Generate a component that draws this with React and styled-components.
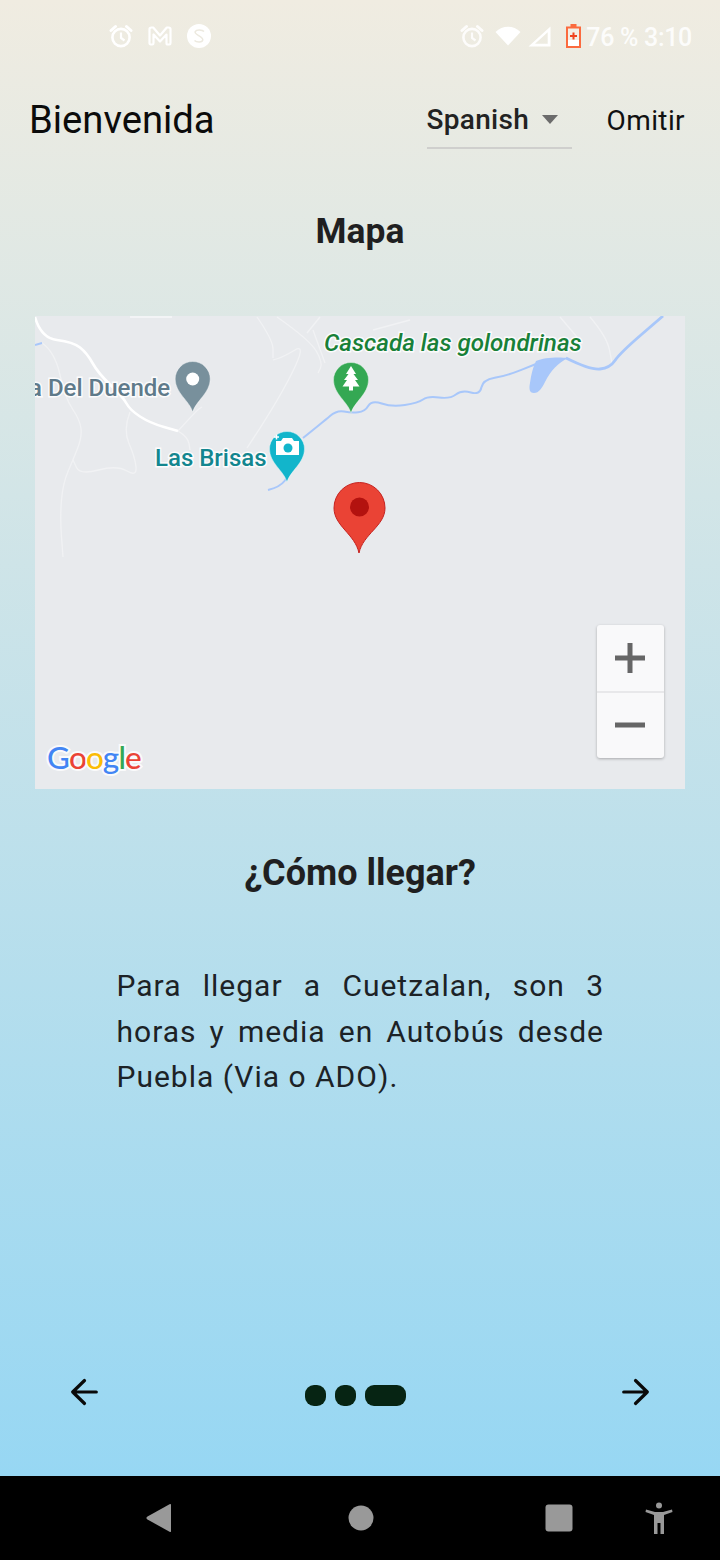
import React from "react";
import styled, { createGlobalStyle } from "styled-components";

const Global = createGlobalStyle`
  html, body { margin: 0; padding: 0; background: #000; }
  #root { width: 720px; height: 1560px; }
`;

const Page = styled.div`
  width: 720px;
  height: 1560px;
  display: flex;
  flex-direction: column;
  overflow: hidden;
  font-family: Roboto, "Noto Sans", sans-serif;
  color: #1d1d1f;
`;

const Screen = styled.main`
  flex: 0 0 1476px;
  display: flex;
  flex-direction: column;
  background: linear-gradient(180deg, #f0ece1 0%, #97d7f3 100%);
`;

const StatusBar = styled.header`
  height: 72px;
  padding: 0 28px 0 109px;
  box-sizing: border-box;
  display: flex;
  align-items: center;
  justify-content: space-between;
  color: #fff;
`;

const StatusGroup = styled.div`
  display: flex;
  align-items: center;
  gap: ${(p) => p.$gap}px;
`;

const StatusIcon = styled.span`
  display: flex;
  margin-left: ${(p) => p.$left || 0}px;
  margin-top: ${(p) => p.$top || 0}px;
`;

const StatusText = styled.span`
  font-size: 25px;
  font-weight: 500;
  line-height: 30px;
  margin-left: -5px;
  margin-top: 4px;
  letter-spacing: -0.3px;
  color: rgba(255, 255, 255, 0.88);
  white-space: nowrap;
`;

const AppBar = styled.div`
  height: 96px;
  padding: 0 35px 0 29px;
  display: flex;
  align-items: center;
`;

const AppTitle = styled.h1`
  flex: 1;
  margin: 0;
  font-size: 38.2px;
  font-weight: 400;
  color: #0b0b0b;
`;

const LangSelect = styled.div`
  width: 145px;
  height: 58px;
  box-sizing: border-box;
  border-bottom: 2px solid #cfcfcd;
  display: flex;
  align-items: center;
  justify-content: space-between;
  padding: 0 14px 0 0;
  font-size: 28px;
  font-weight: 500;
  letter-spacing: 0.3px;
  color: #222;
`;

const Caret = styled.span`
  width: 0;
  height: 0;
  border-left: 8.5px solid transparent;
  border-right: 8.5px solid transparent;
  border-top: 9px solid #6b6b6b;
`;

const SkipLink = styled.span`
  margin-left: 35px;
  font-size: 28px;
  letter-spacing: 0.4px;
  color: #111;
`;

const SectionTitle = styled.h2`
  margin: ${(p) => p.$top}px 0 0;
  height: 40px;
  font-size: ${(p) => p.$size}px;
  line-height: 40px;
  font-weight: 700;
  text-align: center;
  color: #1f1f21;
`;

const MapFrame = styled.section`
  position: relative;
  width: 650px;
  height: 473px;
  margin: 65px 0 0 35px;
  background: #e8eaed;
  overflow: hidden;
`;

const MapArt = styled.svg`
  display: block;
  width: 650px;
  height: 473px;
`;

const MapLabel = styled.text`
  font-family: Roboto, sans-serif;
  font-weight: 500;
  font-size: ${(p) => p.$size}px;
  font-style: ${(p) => (p.$italic ? "italic" : "normal")};
  fill: ${(p) => p.$color};
  stroke: #fff;
  stroke-width: 3px;
  stroke-opacity: 0.85;
  paint-order: stroke;
`;

const LogoText = styled.text`
  font-family: Lato, sans-serif;
  font-size: 31.5px;
  font-weight: 500;
  letter-spacing: -0.9px;
  stroke: #fff;
  stroke-width: 4px;
  stroke-opacity: 0.8;
  paint-order: stroke;
`;

const ZoomControl = styled.div`
  position: absolute;
  top: 309px;
  right: 21.5px;
  width: 67px;
  height: 133px;
  display: flex;
  flex-direction: column;
  background: #f9f9fa;
  border-radius: 3px;
  box-shadow: 0 1px 3px rgba(0, 0, 0, 0.28);
`;

const ZoomButton = styled.div`
  flex: 1;
  display: flex;
  align-items: center;
  justify-content: center;
  border-top: ${(p) => (p.$divider ? "2px solid #e8e8ea" : "none")};
`;

const Paragraph = styled.p`
  margin: 70px 116px 0 116.5px;
  font-size: 30px;
  line-height: 45.5px;
  letter-spacing: 1px;
  text-align: justify;
  color: #1c2226;
`;

const Pager = styled.div`
  margin-top: auto;
  height: 98px;
  padding: 0 70px;
  display: flex;
  align-items: flex-start;
  justify-content: space-between;
`;

const Dots = styled.div`
  display: flex;
  gap: 9px;
  margin: 7px 0 0 -9px;
`;

const Dot = styled.span`
  display: block;
  width: ${(p) => (p.$active ? 41 : 21)}px;
  height: 21px;
  border-radius: 9px;
  background: #062413;
`;

const NavBar = styled.nav`
  flex: 0 0 84px;
  background: #000;
  display: flex;
  align-items: center;
  padding: 0 47px 0 146px;
  box-sizing: border-box;
`;

const NavSlot = styled.span`
  display: flex;
  margin-left: ${(p) => p.$left}px;
`;

const Arrow = ({ dir }) => (
  <svg width="30" height="28" viewBox="0 0 30 28" fill="none" stroke="#0a0a0a" strokeWidth="3.2" strokeLinecap="round" strokeLinejoin="round">
    {dir === "left" ? <path d="M26.3 14H2.7M14.5 2.500 2.700 14 14.500 25.500" /> : <path d="M3.700 14h23.600M15.500 2.500 27.300 14 15.500 25.500" />}
  </svg>
);

const Alarm = ({ o = 1 }) => (
  <svg width="24" height="24" viewBox="0 0 24 24" fill="none" stroke="#fff" strokeOpacity={o} strokeWidth="2.6">
    <circle cx="12" cy="13.5" r="8.6" />
    <path d="M12 8.5v5.5l3.5 2.500" strokeWidth="2.200" />
    <path d="M2 6.500 6.500 2.500M22 6.500 17.500 2.500" strokeLinecap="round" strokeWidth="3" />
  </svg>
);

const Pin = ({ x, y, color }) => (
  <path
    d={`M${x} ${y + 33}C${x - 3} ${y + 22} ${x - 17.5} ${y + 14} ${x - 17.5} ${y}a17.5 17.5 0 0 1 35 0C${x + 17.5} ${y + 14} ${x + 3} ${y + 22} ${x} ${y + 33}Z`}
    fill={color}
    stroke="#fff"
    strokeOpacity="0.5"
    strokeWidth="0.8"
  />
);

// Smooth a polyline through midpoints with quadratic segments.
const smooth = (pts) => {
  let d = `M${pts[0][0]} ${pts[0][1]}`;
  for (let i = 1; i < pts.length - 1; i++) {
    const mx = (pts[i][0] + pts[i + 1][0]) / 2;
    const my = (pts[i][1] + pts[i + 1][1]) / 2;
    d += `Q${pts[i][0]} ${pts[i][1]} ${mx} ${my}`;
  }
  const last = pts[pts.length - 1];
  return `${d}L${last[0]} ${last[1]}`;
};

const faintRoads = [
  [[42, 343], [55, 352], [65, 398], [80, 420], [82, 437], [73, 460], [63, 483], [60, 517], [63, 557]],
  [[130, 412], [123, 430], [135, 457], [137, 477], [117, 465], [80, 475], [73, 460]],
  [[178, 431], [197, 410], [202, 407]],
  [[178, 431], [188, 437], [190, 450]],
  [[247, 448], [277, 403], [307, 343], [283, 357], [273, 360]],
  [[257, 317], [273, 340], [273, 358]],
  [[277, 317], [310, 340], [323, 363], [318, 373]],
  [[320, 317], [307, 333]],
  [[590, 317], [607, 337], [612, 363]],
  [[560, 317], [577, 337]],
  [[410, 320], [373, 330]],
  [[313, 330], [325, 363]],
];

const road = [[35, 317], [41, 338], [73, 342], [87, 353], [98, 373], [123, 397], [130, 410], [150, 423], [178, 431]];

const riverMain = [[268, 490], [280, 487], [289, 475]];
const riverUpper = [[303, 438], [323, 422], [337, 410], [351, 413], [365, 411.7], [371.7, 400], [391.7, 407], [418, 403], [428, 396], [450, 399], [461.7, 390], [480, 395], [482.7, 380], [506.7, 375.7], [536, 364]];
const riverEast = [[566, 358], [590, 370], [610, 368], [620, 353], [663, 316]];

export default function App() {
  return (
    <Page>
      <Global />
      <Screen>
        <StatusBar>
          <StatusGroup $gap={15}>
            <Alarm />
            <svg width="24" height="20" viewBox="0 0 24 20" fill="none" stroke="#fff" strokeWidth="2.2" strokeLinejoin="round">
              <path d="M1.5 3c0-1 .8-1.5 2-1.5h1.7L12 9.5l6.8-8h1.7c1.2 0 2 .5 2 1.5v14c0 1-.5 1.5-1.2 1.5h-1.6c-.7 0-1.2-.5-1.2-1.5V8.5L12 15.5l-6.5-7V17c0 1-.5 1.5-1.2 1.5H2.7c-.7 0-1.2-.5-1.2-1.5Z" />
            </svg>
            <svg width="24" height="24" viewBox="0 0 24 24">
              <circle cx="12" cy="12" r="12" fill="#fff" />
              <path d="M17 7.5c-1.5-1.8-7.5-2.5-8.8.2-1.4 3 7.6 4.7 7.6 8.1-.2 3-6.300 2.700-8.300.700" fill="none" stroke="#ece9df" strokeWidth="1.500" />
            </svg>
          </StatusGroup>
          <StatusGroup $gap={10}>
            <Alarm o={0.85} />
            <StatusIcon $left={1}>
              <svg width="26" height="20" viewBox="0 0 26 20"><path d="M0.500 6C7.500 -1 18.500 -1 25.500 6L13 19.500Z" fill="#fff" /></svg>
            </StatusIcon>
            <StatusIcon $left={-3} $top={1}>
              <svg width="23" height="21" viewBox="0 0 23 21"><path d="M0.500 20.500 22.500 0.500v20Zm6.500-2.700h12.700V6.300Z" fill="#fff" fillRule="evenodd" /></svg>
            </StatusIcon>
            <StatusIcon $left={5} $top={-1}>
              <svg width="15" height="24" viewBox="0 0 15 24">
                <path d="M4.500 0h6v2.500h4.500v21.500H0V2.500h4.500Z" fill="#fb6a3e" />
                <rect x="2" y="4.500" width="11" height="17.500" fill="#f3efe6" />
                <rect x="2" y="16" width="11" height="6" fill="#fff" />
                <path d="M6.500 8.500h2v2.500h2.500v2H8.500v2.500h-2V13H4v-2h2.500Z" fill="#f0441f" />
              </svg>
            </StatusIcon>
            <StatusText>76 % 3:10</StatusText>
          </StatusGroup>
        </StatusBar>

        <AppBar>
          <AppTitle>Bienvenida</AppTitle>
          <LangSelect>
            Spanish
            <Caret />
          </LangSelect>
          <SkipLink>Omitir</SkipLink>
        </AppBar>

        <SectionTitle $top={43} $size={35.4}>Mapa</SectionTitle>

        <MapFrame>
          <MapArt viewBox="35 316 650 473">
            <g fill="none" stroke="#f1f2f4" strokeWidth="1.300" strokeLinejoin="round">
              {faintRoads.map((pts) => (
                <path key={pts.join()} d={smooth(pts)} />
              ))}
            </g>
            <path d={smooth(road)} fill="none" stroke="#fff" strokeWidth="2.600" />
            <path d="M130 317h42" fill="none" stroke="#f7f7f8" strokeWidth="1.500" />
            <g fill="none" stroke="#a8c7fa" strokeWidth="2" strokeLinejoin="round">
              <path d={smooth(riverMain)} />
              <path d={smooth(riverUpper)} />
              <path d={smooth(riverEast)} strokeWidth="2.800" />
              <path d="M35 345l7-2" />
            </g>
            <path d="M536 361c8-4 24-4 32-3-10 5-17 12-23 24-3 6-6 11-11 11-5 0-5-5-4-10 1-8 3-16 6-22Z" fill="#a8c7fa" />

            <MapLabel x="324" y="351" $size={24.200} $color="#188038" $italic>Cascada las golondrinas</MapLabel>
            <MapLabel x="29" y="396" $size={24} $color="#5f7a8a">a Del Duende</MapLabel>
            <MapLabel x="155" y="466" $size={24} $color="#13868f">Las Brisas</MapLabel>

            <Pin x={192.700} y={379} color="#78909c" />
            <circle cx="192.700" cy="379" r="6.500" fill="#fff" />

            <Pin x={351} y={380} color="#34a853" />
            <path d="M351 366l5 8h-2.500l4.500 6h-3l4.500 6.500h-6.500v4h-4v-4h-6.500l4.500-6.500h-3l4.500-6H346Z" fill="#fff" />

            <Pin x={287} y={449} color="#12b5cb" />
            <path d="M276 441h5l2-3h9l2 3h5v14h-23Z" fill="#fff" />
            <circle cx="288" cy="448" r="4.500" fill="#12b5cb" />
            <path d="M274 437h5M276.500 434.500v5" stroke="#fff" strokeWidth="1.500" />

            <path d="M359 553C355 534 334 526 334 508a25.500 25.500 0 0 1 51 0C385 526 363 534 359 553Z" fill="#ea4335" stroke="#c5221f" strokeWidth="1" />
            <circle cx="359.500" cy="507" r="9.500" fill="#b3120f" />

            <LogoText x="47" y="769">
              <tspan fill="#4285f4">G</tspan>
              <tspan fill="#ea4335">o</tspan>
              <tspan fill="#fbbc05">o</tspan>
              <tspan fill="#4285f4">g</tspan>
              <tspan fill="#34a853">l</tspan>
              <tspan fill="#ea4335">e</tspan>
            </LogoText>
          </MapArt>
          <ZoomControl>
            <ZoomButton>
              <svg width="32" height="32" viewBox="0 0 32 32"><path d="M13.500 1h5v12.500h12.500v5H18.500V31h-5V18.500H1v-5h12.500Z" fill="#666" /></svg>
            </ZoomButton>
            <ZoomButton $divider>
              <svg width="32" height="6" viewBox="0 0 32 6"><rect x="1" y="0.500" width="30" height="5" fill="#666" /></svg>
            </ZoomButton>
          </ZoomControl>
        </MapFrame>

        <SectionTitle $top={64} $size={36}>¿Cómo llegar?</SectionTitle>

        <Paragraph>Para llegar a Cuetzalan, son 3 horas y media en Autobús desde Puebla (Via o ADO).</Paragraph>

        <Pager>
          <Arrow dir="left" />
          <Dots>
            <Dot />
            <Dot />
            <Dot $active />
          </Dots>
          <Arrow dir="right" />
        </Pager>
      </Screen>

      <NavBar>
        <NavSlot $left={0}>
          <svg width="26" height="30" viewBox="0 0 26 30"><path d="M24 1c1 0 1 .5 1 1.500v25c0 1 0 1.500-1 1.500L1.500 16.500c-1.500-1-1.500-2 0-3Z" fill="#999" /></svg>
        </NavSlot>
        <NavSlot $left={176}>
          <svg width="26" height="26" viewBox="0 0 26 26"><circle cx="13" cy="13" r="12.500" fill="#999" /></svg>
        </NavSlot>
        <NavSlot $left={171}>
          <svg width="28" height="28" viewBox="0 0 28 28"><rect x="0.500" y="0.500" width="27" height="27" rx="3" fill="#999" /></svg>
        </NavSlot>
        <NavSlot $left={72}>
          <svg width="28" height="32" viewBox="0 0 28 32">
            <circle cx="14" cy="3.500" r="3" fill="#999" />
            <path d="M1 7.500l9 2.500h8l9-2.500.500 2.500-8.500 3V32h-3.500V21h-3v11H9V13L.500 10Z" fill="#999" />
          </svg>
        </NavSlot>
      </NavBar>
    </Page>
  );
}
